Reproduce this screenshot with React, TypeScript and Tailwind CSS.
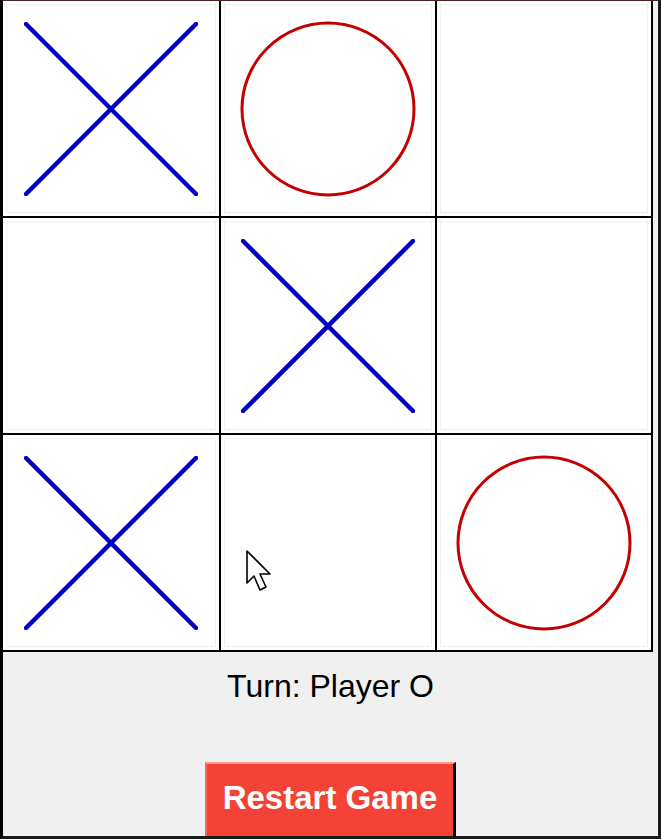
import React, { useState } from "react";

type Mark = "X" | "O" | null;

const initialBoard: Mark[] = ["X", "O", null, null, "X", null, "X", null, "O"];

function XMark() {
  return (
    <svg width="174" height="174" viewBox="0 0 174 174" className="block">
      <line x1="2" y1="2" x2="172" y2="172" stroke="#0000c4" strokeWidth="4.5" strokeLinecap="round" />
      <line x1="2" y1="172" x2="172" y2="2" stroke="#0000c4" strokeWidth="4.5" strokeLinecap="round" />
    </svg>
  );
}

function OMark() {
  return (
    <svg width="178" height="178" viewBox="0 0 178 178" className="block">
      <circle cx="89" cy="89" r="86" fill="none" stroke="#c40000" strokeWidth="3" />
    </svg>
  );
}

export default function App() {
  const [board, setBoard] = useState<Mark[]>(initialBoard);
  const [turn, setTurn] = useState<"X" | "O">("O");

  const handleClick = (i: number) => {
    if (board[i]) return;
    const next = [...board];
    next[i] = turn;
    setBoard(next);
    setTurn(turn === "X" ? "O" : "X");
  };

  const handleRestart = () => {
    setBoard(Array(9).fill(null));
    setTurn("X");
  };

  return (
    <div
      className="relative w-[661px] h-[839px] overflow-hidden bg-[#f0f0f0] border-t border-t-[#4a2626] border-l-[3px] border-r-[3px] border-b-[3px] border-l-black border-r-[#1a1a1a] border-b-[#1a1a1a] flex flex-col"
      style={{ fontFamily: '"Liberation Sans", Arial, sans-serif' }}
    >
      {/* board */}
      <div className="w-[650px] bg-black grid grid-cols-[216px_214px_214px] grid-rows-[215px_215px_215px] gap-[2px] pr-[2px] pb-[2px]">
        {board.map((mark, i) => (
          <div
            key={i}
            onClick={() => handleClick(i)}
            className="bg-white p-[3px] cursor-pointer"
          >
            <div className="w-full h-full border border-[#efefef] flex items-center justify-center">
              {mark === "X" && <XMark />}
              {mark === "O" && <OMark />}
            </div>
          </div>
        ))}
      </div>

      {/* status */}
      <div className="flex-1 flex flex-col items-center">
        <div className="mt-[16px] text-[32px] leading-[37px] text-black">
          Turn: Player {turn}
        </div>
        <button
          onClick={handleRestart}
          className="mt-[57px] h-[80px] px-[16px] pb-[8px] bg-[#f44336] text-white font-bold text-[33px] leading-none border-t-2 border-l-2 border-r-[3px] border-b-[3px] border-t-[#ff9a90] border-l-[#f66a5e] border-r-black border-b-black"
        >
          Restart Game
        </button>
      </div>

      {/* mouse pointer */}
      <svg
        className="absolute left-[242px] top-[548px] pointer-events-none"
        width="30"
        height="46"
        viewBox="0 0 30 46"
      >
        <path
          d="M2 2 L2 34 L9 27 L15 41 L21 38 L15 25 L25 25 Z"
          fill="white"
          stroke="black"
          strokeWidth="1.6"
          strokeLinejoin="round"
        />
      </svg>
    </div>
  );
}
